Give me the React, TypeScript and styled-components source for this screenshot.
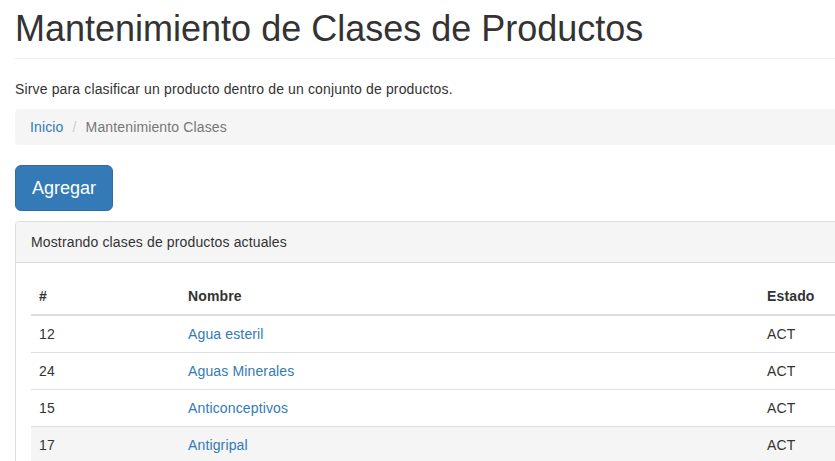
import React from "react";
import styled, { createGlobalStyle } from "styled-components";

const Global = createGlobalStyle`
  html, body { margin: 0; padding: 0; overflow: hidden; background: #fff; }
  body {
    font-family: "Liberation Sans", Arial, sans-serif;
    font-size: 14px;
    line-height: 1.42857143;
    color: #333;
    letter-spacing: 0.14px;
  }
  * { box-sizing: border-box; }
`;

const Container = styled.div`
  width: 1170px;
  padding: 0 15px;
`;

const PageHeader = styled.div`
  padding-bottom: 9px;
  margin: 0 0 20px;
  border-bottom: 1px solid #eee;
`;

const Title = styled.h1`
  margin: 0;
  padding-top: 9px;
  font-size: 36px;
  font-weight: 500;
  line-height: 1.1;
  letter-spacing: 0;
`;

const Lead = styled.p`
  margin: 0 0 10px;
`;

const Breadcrumb = styled.ol`
  list-style: none;
  margin: 0 0 20px;
  padding: 8px 15px;
  background: #f5f5f5;
  border-radius: 4px;
  display: flex;
  gap: 4px;

  & > li + li::before {
    content: "/\\00a0";
    padding: 0 5px;
    color: #ccc;
  }
`;

const Crumb = styled.li<{ $active?: boolean }>`
  color: ${(p) => (p.$active ? "#777" : "#337ab7")};
`;

const Button = styled.button`
  display: inline-block;
  font-family: inherit;
  font-size: 18px;
  line-height: 1.3333333;
  padding: 10px 16px;
  border-radius: 6px;
  color: #fff;
  background: #337ab7;
  border: 1px solid #2e6da4;
  margin-bottom: 10px;
  letter-spacing: 0;
`;

const Panel = styled.div`
  border: 1px solid #ddd;
  border-radius: 4px;
  background: #fff;
`;

const PanelHeading = styled.div`
  padding: 10px 15px;
  background: #f5f5f5;
  border-bottom: 1px solid #ddd;
  border-radius: 3px 3px 0 0;
`;

const PanelBody = styled.div`
  padding: 15px;
`;

const Table = styled.table`
  width: 100%;
  border-collapse: collapse;
  border-spacing: 0;
`;

const Th = styled.th<{ $w?: number }>`
  text-align: left;
  padding: 8px;
  line-height: 1.42857143;
  vertical-align: bottom;
  border-bottom: 2px solid #ddd;
  font-weight: bold;
  width: ${(p) => (p.$w ? `${p.$w}px` : "auto")};
`;

const Tr = styled.tr<{ $hover?: boolean }>`
  background: ${(p) => (p.$hover ? "#f5f5f5" : "transparent")};
`;

const Td = styled.td`
  padding: 8px;
  line-height: 1.42857143;
  border-top: 1px solid #ddd;
`;

const Link = styled.a`
  color: #337ab7;
  text-decoration: none;
`;

const rows = [
  { id: 12, name: "Agua esteril", estado: "ACT" },
  { id: 24, name: "Aguas Minerales", estado: "ACT" },
  { id: 15, name: "Anticonceptivos", estado: "ACT" },
  { id: 17, name: "Antigripal", estado: "ACT", hover: true },
];

export default function App() {
  return (
    <Container>
      <Global />
      <PageHeader>
        <Title>Mantenimiento de Clases de Productos</Title>
      </PageHeader>
      <Lead>Sirve para clasificar un producto dentro de un conjunto de productos.</Lead>
      <Breadcrumb>
        <Crumb>Inicio</Crumb>
        <Crumb $active>Mantenimiento Clases</Crumb>
      </Breadcrumb>
      <Button>Agregar</Button>
      <Panel>
        <PanelHeading>Mostrando clases de productos actuales</PanelHeading>
        <PanelBody>
          <Table>
            <thead>
              <tr>
                <Th $w={149}>#</Th>
                <Th $w={579}>Nombre</Th>
                <Th>Estado</Th>
              </tr>
            </thead>
            <tbody>
              {rows.map((r) => (
                <Tr key={r.id} $hover={r.hover}>
                  <Td>{r.id}</Td>
                  <Td>
                    <Link href="#">{r.name}</Link>
                  </Td>
                  <Td>{r.estado}</Td>
                </Tr>
              ))}
            </tbody>
          </Table>
        </PanelBody>
      </Panel>
    </Container>
  );
}
